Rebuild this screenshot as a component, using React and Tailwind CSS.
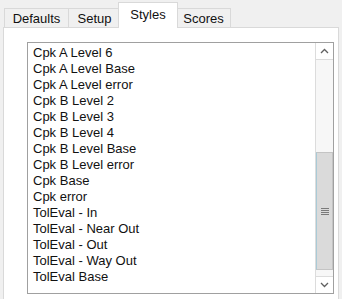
import React from 'react';

const items = [
  'Cpk A Level 6',
  'Cpk A Level Base',
  'Cpk A Level error',
  'Cpk B Level 2',
  'Cpk B Level 3',
  'Cpk B Level 4',
  'Cpk B Level Base',
  'Cpk B Level error',
  'Cpk Base',
  'Cpk error',
  'TolEval - In',
  'TolEval - Near Out',
  'TolEval - Out',
  'TolEval - Way Out',
  'TolEval Base',
];

const Chevron = ({ up }) => (
  <svg width="9" height="6" viewBox="0 0 9 6" className="block">
    <path
      d={up ? 'M1 5 L4.5 1.5 L8 5' : 'M1 1 L4.5 4.5 L8 1'}
      fill="none"
      stroke="#606060"
      strokeWidth="1.3"
    />
  </svg>
);

export default function App() {
  return (
    <div
      className="w-[342px] h-[299px] overflow-hidden bg-[#f0f0f0] text-[13px] leading-[15px] text-[#111]"
      style={{ fontFamily: '"Liberation Sans", Arial, sans-serif' }}
    >
      {/* Tab strip */}
      <div className="flex items-end h-[27px] pl-[4px]">
        <div className="w-[65px] h-[19px] flex items-center justify-center border border-b-0 border-[#d9d9d9] bg-[#f0f0f0]">
          Defaults
        </div>
        <div className="-ml-px w-[53px] h-[19px] flex items-center justify-center border border-b-0 border-[#d9d9d9] bg-[#f0f0f0]">
          Setup
        </div>
        <div className="relative z-10 -ml-[3px] -mb-px w-[60px] h-[26px] flex justify-center pt-[4px] border border-b-0 border-[#d9d9d9] bg-white">
          Styles
        </div>
        <div className="-ml-[2px] w-[55px] h-[19px] flex items-center justify-center border border-b-0 border-[#d9d9d9] bg-[#f0f0f0]">
          Scores
        </div>
      </div>

      {/* Panel */}
      <div className="ml-[3px] w-[336px] h-[290px] border border-[#d9d9d9] bg-white pt-[14px] pl-[23px]">
        {/* List box */}
        <div className="w-[307px] h-[252px] border border-[#a0a0a0] bg-white flex">
          <div className="flex-1 pt-[2px] pl-[5px] leading-[16px]">
            {items.map((item) => (
              <div key={item} className="h-[16px] whitespace-nowrap">
                {item}
              </div>
            ))}
          </div>

          {/* Scrollbar */}
          <div className="w-[18px] flex flex-col bg-[#f7f7f7] border-l border-[#dcdcdc]">
            <div className="h-[17px] flex items-center justify-center bg-white border-b border-[#dcdcdc]">
              <Chevron up />
            </div>
            <div className="flex-1 flex flex-col">
              <div className="h-[92px]" />
              <div className="h-[118px] bg-[#dadada] border border-[#c4c4c4] border-l-[#a9cad6] flex flex-col items-center justify-center gap-[1px]">
                <div className="w-[8px] h-px bg-[#7a7a7a]" />
                <div className="w-[8px] h-px bg-[#7a7a7a]" />
                <div className="w-[8px] h-px bg-[#7a7a7a]" />
                <div className="w-[8px] h-px bg-[#7a7a7a]" />
              </div>
            </div>
            <div className="h-[17px] flex items-center justify-center bg-white border-t border-[#dcdcdc]">
              <Chevron />
            </div>
          </div>
        </div>
      </div>
    </div>
  );
}
